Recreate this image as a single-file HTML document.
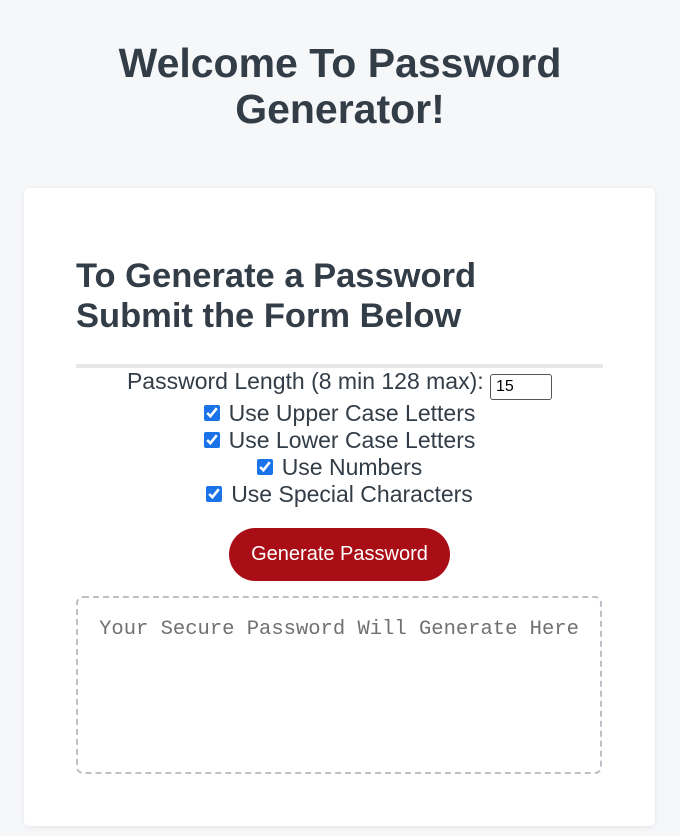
<!DOCTYPE html>
<html><head><style>
body{margin:0;background:#f6f7f9;font-family:"Liberation Sans",Arial,sans-serif;color:#333d47;width:680px;height:836px;overflow:hidden}
h1{margin:0;position:absolute;top:40px;left:0;width:680px;text-align:center;font-size:41px;line-height:46px;font-weight:bold}
.card{position:absolute;left:24px;top:188px;width:631px;height:638px;background:#fff;border-radius:5px;box-shadow:0 1px 6px rgba(0,0,0,.08)}
h2{position:absolute;left:52px;top:68px;margin:0;font-size:34.5px;line-height:40px;font-weight:bold;white-space:nowrap}
.hr{position:absolute;left:52px;top:176px;width:527px;height:4px;background:#e6e7e8}
.form{position:absolute;left:52px;top:180px;width:527px;text-align:center;font-size:23px;line-height:27px;white-space:nowrap}
.form input[type=checkbox]{width:16px;height:16px;margin:0 9px 0 0;vertical-align:0px;accent-color:#1a73e8}
.num{width:62px;height:26px;font-size:16px;border:1px solid #555;border-radius:3px;padding:0 5px;box-sizing:border-box;vertical-align:-2px;font-family:"Liberation Sans",sans-serif}
.btn{position:absolute;left:205px;top:340px;width:221px;height:53px;border-radius:27px;background:#a90e17;color:#fff;font-size:20px;line-height:53px;text-align:center}
.ta{position:absolute;left:52px;top:408px;width:526px;height:178px;box-sizing:border-box;border:2px dashed #bcc1c8;border-radius:7px;font-family:"Liberation Mono",monospace;font-size:20.5px;color:#707070;text-align:center;padding-top:20px;white-space:nowrap}
</style></head><body>
<h1>Welcome To Password<br>Generator!</h1>
<div class="card">
<h2>To Generate a Password<br>Submit the Form Below</h2>
<div class="hr"></div>
<div class="form">
<div>Password Length (8 min 128 max): <input class="num" value="15"></div>
<div><input type="checkbox" checked>Use Upper Case Letters</div>
<div><input type="checkbox" checked>Use Lower Case Letters</div>
<div><input type="checkbox" checked>Use Numbers</div>
<div><input type="checkbox" checked>Use Special Characters</div>
</div>
<div class="btn">Generate Password</div>
<div class="ta">Your Secure Password Will Generate Here</div>
</div>
</body></html>
